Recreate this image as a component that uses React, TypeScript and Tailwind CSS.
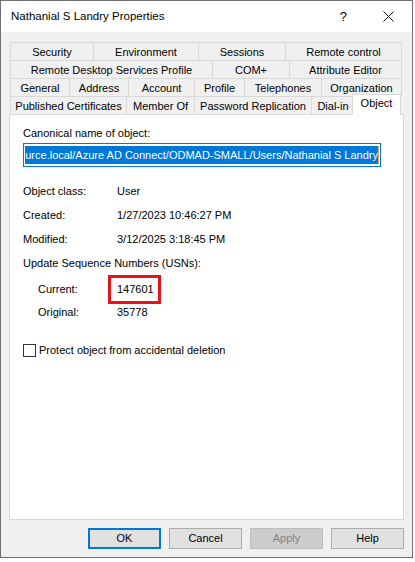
import React from 'react';

type Tab = { label: string; w: string };

const rows: Tab[][] = [
  [
    { label: 'Security', w: 'w-[83px]' },
    { label: 'Environment', w: 'w-[105px]' },
    { label: 'Sessions', w: 'w-[87px]' },
    { label: 'Remote control', w: 'w-[117px]' },
  ],
  [
    { label: 'Remote Desktop Services Profile', w: 'w-[202px]' },
    { label: 'COM+', w: 'w-[77px]' },
    { label: 'Attribute Editor', w: 'w-[113px]' },
  ],
  [
    { label: 'General', w: 'w-[59px]' },
    { label: 'Address', w: 'w-[59px]' },
    { label: 'Account', w: 'w-[66px]' },
    { label: 'Profile', w: 'w-[50px]' },
    { label: 'Telephones', w: 'w-[77px]' },
    { label: 'Organization', w: 'w-[81px]' },
  ],
];

const lastRow: Tab[] = [
  { label: 'Published Certificates', w: 'w-[116px]' },
  { label: 'Member Of', w: 'w-[68px]' },
  { label: 'Password Replication', w: 'w-[117px]' },
  { label: 'Dial-in', w: 'w-[43px]' },
];

const TabCell: React.FC<{ tab: Tab; last?: boolean }> = ({ tab, last }) => (
  <div
    className={`${tab.w} h-[18px] shrink-0 border-t border-l border-[#d9d9d9] ${last ? 'border-r' : ''} flex items-center justify-center leading-[18px] whitespace-nowrap`}
  >
    {tab.label}
  </div>
);

const Field: React.FC<{ label: string; value: string; indent?: boolean; className?: string }> = ({ label, value, indent, className }) => (
  <div className={`flex h-4 items-center ${className ?? ''}`}>
    <div className={indent ? 'w-[79px] ml-[15px]' : 'w-[94px]'}>{label}</div>
    <div>{value}</div>
  </div>
);

const Button: React.FC<{ label: string; primary?: boolean; disabled?: boolean }> = ({ label, primary, disabled }) => (
  <button
    className={`w-[73px] h-[21px] flex items-center justify-center ${
      primary
        ? 'border-2 border-[#0078d7] bg-[#e1e1e1] text-black'
        : disabled
        ? 'border border-[#bfbfbf] bg-[#cccccc] text-[#838383]'
        : 'border border-[#adadad] bg-[#e1e1e1] text-black'
    }`}
  >
    {label}
  </button>
);

export default function App() {
  return (
    <div className="w-[415px] h-[562px] bg-white" style={{ fontFamily: '"Liberation Sans", Arial, sans-serif' }}>
      <div className="w-[413px] h-[558px] border border-[#6f6f6f] flex flex-col text-[11px] text-black">
        {/* title bar */}
        <div className="h-[31px] bg-white flex items-center pl-[10px] pr-[18px] pt-px shrink-0">
          <span className="text-[11.5px] flex-1">Nathanial S Landry Properties</span>
          <span className="text-[13px] mr-[36px]">?</span>
          <svg width="11" height="11" viewBox="0 0 11 11" className="mb-px">
            <path d="M0.5 0.5 L10.5 10.5 M10.5 0.5 L0.5 10.5" stroke="#111" strokeWidth="1" />
          </svg>
        </div>

        {/* body */}
        <div className="flex-1 bg-[#f0f0f0] px-[8px] pt-[10px] pb-[8px] flex flex-col">
          <div className="pl-px">
            {rows.map((row, i) => (
              <div key={i} className="flex">
                {row.map((t, j) => (
                  <TabCell key={t.label} tab={t} last={j === row.length - 1} />
                ))}
              </div>
            ))}
            <div className="flex items-end h-[18px]">
              {lastRow.map((t) => (
                <TabCell key={t.label} tab={t} />
              ))}
              <div className="w-[49px] h-[21px] -mb-px -ml-[2px] relative z-10 bg-white border-t border-l border-r border-[#d9d9d9] flex justify-center pt-[1px] leading-[14px]">
                Object
              </div>
            </div>
          </div>

          {/* panel */}
          <div className="h-[406px] bg-white border border-[#d9d9d9] pl-[13px] pt-[10px]">
            <div className="h-4 flex items-center">Canonical name of object:</div>
            <div className="mt-[2px] w-[358px] h-[24px] border border-[#0078d7] flex items-center px-[1px]">
              <div className="flex justify-end w-full">
                <span className="bg-[#0078d7] text-white whitespace-nowrap leading-[18px] h-[18px]">
                  urce.local/Azure AD Connect/ODMAD-SMALL/Users/Nathanial S Landry
                </span>
                <span className="w-px h-[18px] bg-[#f7a23b] shrink-0" />
              </div>
            </div>

            <Field label="Object class:" value="User" className="mt-[16px]" />
            <Field label="Created:" value="1/27/2023 10:46:27 PM" className="mt-[8px]" />
            <Field label="Modified:" value="3/12/2025 3:18:45 PM" className="mt-[8px]" />
            <div className="h-4 flex items-center mt-[8px]">Update Sequence Numbers (USNs):</div>

            <div className="flex h-4 items-center mt-[10px]">
              <div className="w-[79px] ml-[15px]">Current:</div>
              <div className="relative">
                147601
                <div className="absolute left-[-9px] top-[-6px] w-[53px] h-[29px] border-[3px] border-[#e5141c]" />
              </div>
            </div>
            <Field label="Original:" value="35778" indent className="mt-[7px]" />

            <div className="flex h-4 items-center mt-[22px]">
              <div className="w-[13px] h-[13px] border border-[#333333] bg-white mr-[3px]" />
              <span>Protect object from accidental deletion</span>
            </div>
          </div>

          {/* buttons */}
          <div className="mt-[8px] flex justify-end gap-[8px]">
            <Button label="OK" primary />
            <Button label="Cancel" />
            <Button label="Apply" disabled />
            <Button label="Help" />
          </div>
        </div>
      </div>
    </div>
  );
}
